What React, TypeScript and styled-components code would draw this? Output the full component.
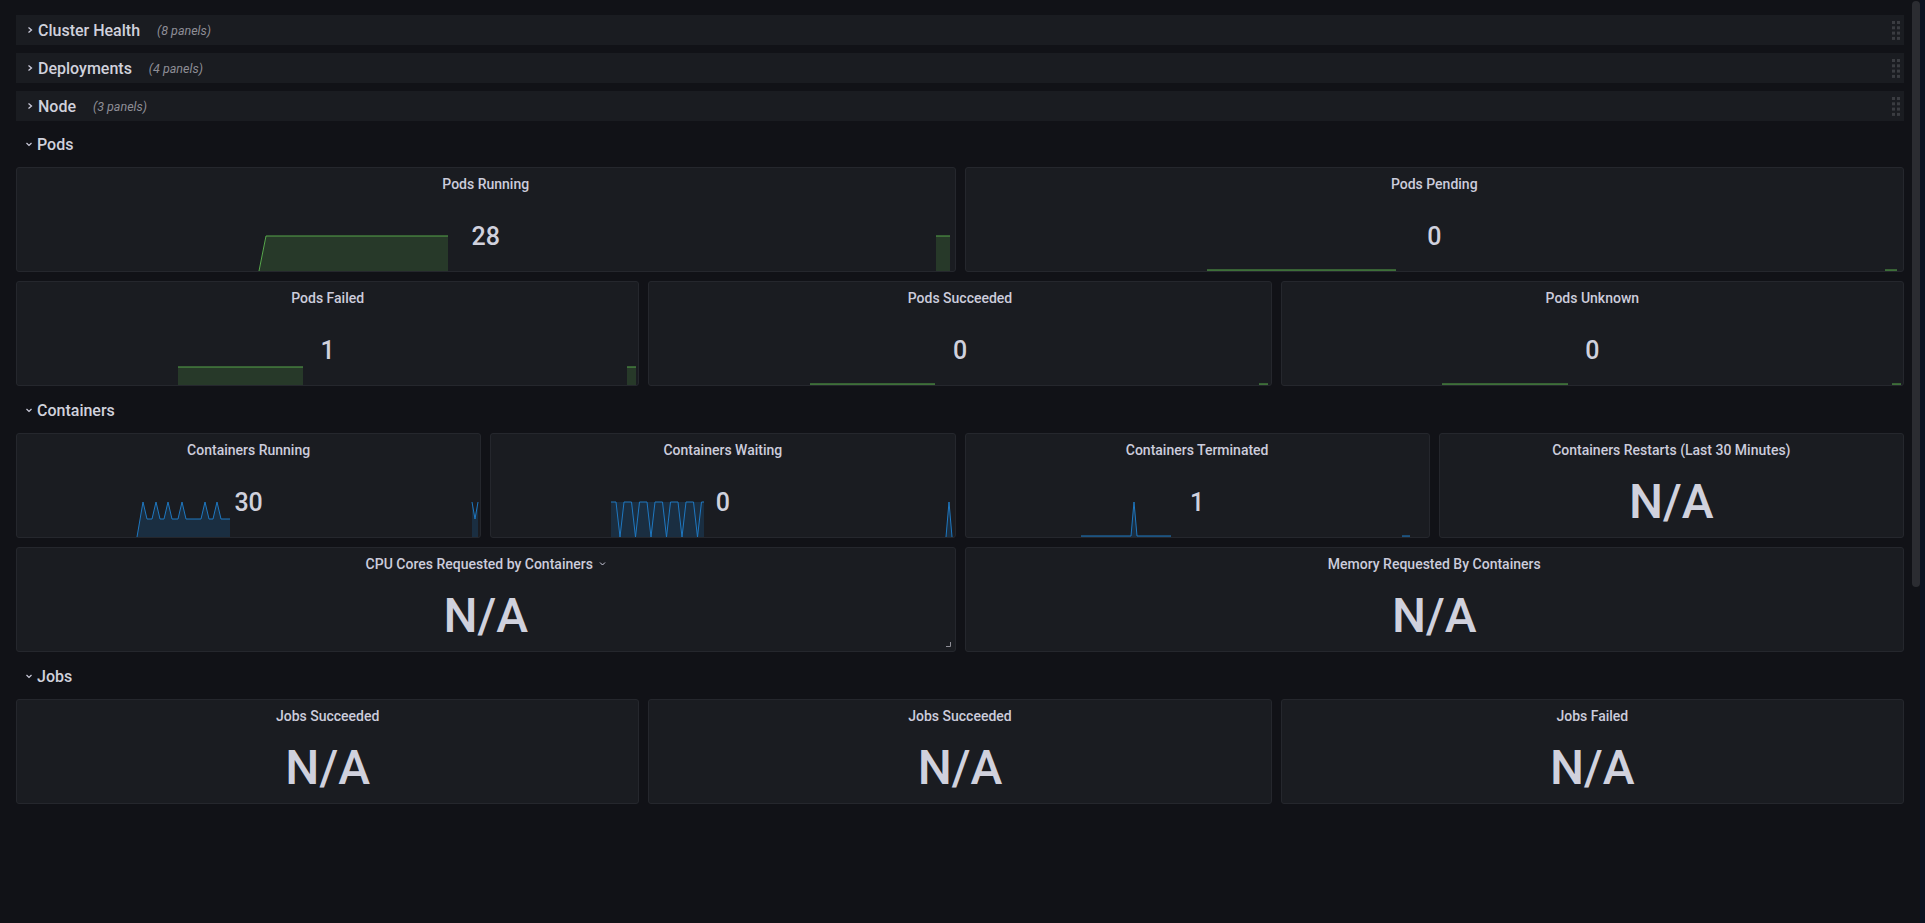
import React from 'react';
import styled, { createGlobalStyle } from 'styled-components';

type Pt = [number, number];
type Series = { line: Pt[]; fill?: Pt[] };
type Tone = 'green' | 'blue';

const TONES: Record<Tone, { line: string; fill: string }> = {
  green: { line: '#56a64b', fill: 'rgba(86, 166, 75, 0.22)' },
  blue: { line: '#1f78c1', fill: 'rgba(31, 120, 193, 0.2)' },
};

// chart area is the panel's padding box: 103px high
const BOTTOM = 103;

const GlobalStyle = createGlobalStyle`
  html, body {
    margin: 0;
    padding: 0;
    background: #111217;
  }
  body {
    font-family: Roboto, "Liberation Sans", sans-serif;
    color: #ccccdc;
    overflow: hidden;
  }
`;

const Page = styled.div`
  display: flex;
  height: 923px;
  background: #111217;
`;

const Main = styled.main`
  flex: 1;
  min-width: 0;
  padding: 15px 8px 0 16px;
  display: flex;
  flex-direction: column;
`;

const ScrollTrack = styled.div`
  width: 8px;
  padding-top: 1px;
`;

const ScrollThumb = styled.div`
  height: 586px;
  border-radius: 4px;
  background: #2b2c31;
`;

const EdgeStrip = styled.div`
  width: 5px;
  background: #0b1322;
`;

const RowBar = styled.div`
  height: 30px;
  margin-bottom: 8px;
  display: flex;
  align-items: center;
  padding: 0 4px 0 10px;
  background: #1a1c21;
`;

const RowHeader = styled.div`
  height: 30px;
  margin-bottom: 8px;
  display: flex;
  align-items: center;
  padding-left: 9px;
`;

const Chevron = styled.svg`
  width: 8px;
  height: 8px;
  margin-right: 4px;
  flex: none;
`;

const RowTitle = styled.span`
  font-size: 16px;
  font-weight: 500;
  color: #d0d1dc;
`;

const RowCount = styled.span`
  margin-left: 17px;
  font-size: 12.5px;
  font-style: italic;
  color: #8e8e96;
  flex: 1;
`;

const Grid = styled.div<{ $cols: number }>`
  display: grid;
  grid-template-columns: repeat(${(p) => p.$cols}, 1fr);
  gap: 9px;
  margin-bottom: 9px;
`;

const Panel = styled.div`
  position: relative;
  height: 105px;
  box-sizing: border-box;
  border: 1px solid #25272d;
  border-radius: 3px;
  background: #1a1c21;
  display: flex;
  flex-direction: column;
  overflow: hidden;
`;

const PanelTitle = styled.div`
  position: relative;
  z-index: 1;
  height: 31px;
  display: flex;
  align-items: center;
  justify-content: center;
  font-size: 14px;
  font-weight: 500;
  color: #ccccdc;
`;

const TitleMenu = styled.svg`
  width: 7px;
  height: 7px;
  margin-left: 6px;
`;

const ValueArea = styled.div`
  position: relative;
  z-index: 1;
  flex: 1;
  display: flex;
  align-items: center;
  justify-content: center;
  padding-top: 2px;
`;

const Value = styled.span<{ $big?: boolean }>`
  font-size: ${(p) => (p.$big ? '48px' : '25px')};
  font-weight: 500;
  color: #d0d1dd;
  line-height: 1;
`;

const Chart = styled.svg`
  position: absolute;
  left: 0;
  top: 0;
  width: 100%;
  height: 100%;
  z-index: 0;
`;

const ResizeMark = styled.svg`
  position: absolute;
  right: 4px;
  bottom: 4px;
  width: 5px;
  height: 5px;
  z-index: 1;
`;

const ChevronRight = () => (
  <Chevron viewBox="0 0 8 8">
    <path d="M2.5 1.5 L5.5 4 L2.5 6.5" fill="none" stroke="#ccccdc" strokeWidth="1.3" />
  </Chevron>
);

const ChevronDown = () => (
  <Chevron viewBox="0 0 8 8">
    <path d="M1.5 3 L4 5.5 L6.5 3" fill="none" stroke="#ccccdc" strokeWidth="1.2" />
  </Chevron>
);

const DragHandle = () => (
  <svg width="8" height="19" viewBox="0 0 8 19">
    {[0, 1, 2, 3].map((r) =>
      [0, 5].map((c) => (
        <rect key={`${r}-${c}`} x={c} y={r * 5.3} width="3" height="3" fill="#3a3c41" />
      )),
    )}
  </svg>
);

const CollapsedRow = ({ title, count }: { title: string; count: number }) => (
  <RowBar>
    <ChevronRight />
    <RowTitle>{title}</RowTitle>
    <RowCount>({count} panels)</RowCount>
    <DragHandle />
  </RowBar>
);

const SectionHeader = ({ title }: { title: string }) => (
  <RowHeader>
    <ChevronDown />
    <RowTitle>{title}</RowTitle>
  </RowHeader>
);

const toPoints = (pts: Pt[]) => pts.map((p) => p.join(',')).join(' ');

const Spark = ({ tone, series }: { tone: Tone; series: Series[] }) => {
  const c = TONES[tone];
  return (
    <Chart>
      {series.map((s, i) => {
        const first = s.line[0];
        const last = s.line[s.line.length - 1];
        const fill = s.fill ?? [...s.line, [last[0], BOTTOM] as Pt, [first[0], BOTTOM] as Pt];
        return (
          <g key={i}>
            <polygon points={toPoints(fill)} fill={c.fill} />
            <polyline points={toPoints(s.line)} fill="none" stroke={c.line} strokeWidth="1" />
          </g>
        );
      })}
    </Chart>
  );
};

type PanelProps = {
  title: string;
  value: string;
  big?: boolean;
  menu?: boolean;
  resize?: boolean;
  tone?: Tone;
  series?: Series[];
};

const StatPanel = ({ title, value, big, menu, resize, tone = 'green', series }: PanelProps) => (
  <Panel>
    {series && <Spark tone={tone} series={series} />}
    <PanelTitle>
      {title}
      {menu && (
        <TitleMenu viewBox="0 0 7 7">
          <path d="M1 2.5 L3.5 5 L6 2.5" fill="none" stroke="#ccccdc" strokeWidth="1" />
        </TitleMenu>
      )}
    </PanelTitle>
    <ValueArea>
      <Value $big={big}>{value}</Value>
    </ValueArea>
    {resize && (
      <ResizeMark viewBox="0 0 5 5">
        <path d="M4.5 0 V4.5 H0" fill="none" stroke="#8e8e96" strokeWidth="1" />
      </ResizeMark>
    )}
  </Panel>
);

// flat runs at the bottom of an empty stat
const flat = (a: number, b: number): Series => ({
  line: [
    [a, BOTTOM - 1],
    [b, BOTTOM - 1],
  ],
});

const zigzag = (start: number, count: number, step: number): Series => {
  const line: Pt[] = [[start, 68]];
  for (let i = 0; i < count; i++) {
    const x = start + i * step;
    line.push([x + 5, 68], [x + 9, BOTTOM], [x + 13, 68]);
  }
  const end = start + count * step;
  line.push([end, 68]);
  return {
    line,
    fill: [
      [start, 68],
      [end, 68],
      [end, BOTTOM],
      [start, BOTTOM],
    ],
  };
};

const podsRunning: Series[] = [
  { line: [[242, BOTTOM], [249, 68], [431, 68]] },
  { line: [[919, 68], [933, 68]] },
];
const podsFailed: Series[] = [
  { line: [[161, 85], [286, 85]] },
  { line: [[610, 85], [619, 85]] },
];
const containersRunning: Series[] = [
  {
    line: [
      [120, BOTTOM], [126, 68], [130, 85], [135, 85], [139, 68], [143, 85], [147, 85],
      [151, 68], [155, 85], [161, 85], [165, 68], [169, 85], [184, 85], [188, 68],
      [192, 85], [196, 85], [200, 68], [204, 85], [213, 85],
    ],
  },
  { line: [[455, 68], [458, 85], [461, 68]] },
];
const containersWaiting: Series[] = [
  zigzag(120, 6, 15.5),
  { line: [[455, BOTTOM], [458, 68], [461, BOTTOM]] },
];
const containersTerminated: Series[] = [
  { line: [[115, BOTTOM - 1], [165, BOTTOM - 1], [168, 68], [171, BOTTOM - 1], [205, BOTTOM - 1]] },
  flat(436, 444),
];

export default function App() {
  return (
    <>
      <GlobalStyle />
      <Page>
        <Main>
          <CollapsedRow title="Cluster Health" count={8} />
          <CollapsedRow title="Deployments" count={4} />
          <CollapsedRow title="Node" count={3} />

          <SectionHeader title="Pods" />
          <Grid $cols={2}>
            <StatPanel title="Pods Running" value="28" series={podsRunning} />
            <StatPanel title="Pods Pending" value="0" series={[flat(241, 430), flat(919, 931)]} />
          </Grid>
          <Grid $cols={3}>
            <StatPanel title="Pods Failed" value="1" series={podsFailed} />
            <StatPanel title="Pods Succeeded" value="0" series={[flat(161, 286), flat(610, 619)]} />
            <StatPanel title="Pods Unknown" value="0" series={[flat(160, 286), flat(610, 619)]} />
          </Grid>

          <SectionHeader title="Containers" />
          <Grid $cols={4}>
            <StatPanel title="Containers Running" value="30" tone="blue" series={containersRunning} />
            <StatPanel title="Containers Waiting" value="0" tone="blue" series={containersWaiting} />
            <StatPanel title="Containers Terminated" value="1" tone="blue" series={containersTerminated} />
            <StatPanel title="Containers Restarts (Last 30 Minutes)" value="N/A" big />
          </Grid>
          <Grid $cols={2}>
            <StatPanel title="CPU Cores Requested by Containers" value="N/A" big menu resize />
            <StatPanel title="Memory Requested By Containers" value="N/A" big />
          </Grid>

          <SectionHeader title="Jobs" />
          <Grid $cols={3}>
            <StatPanel title="Jobs Succeeded" value="N/A" big />
            <StatPanel title="Jobs Succeeded" value="N/A" big />
            <StatPanel title="Jobs Failed" value="N/A" big />
          </Grid>
        </Main>
        <ScrollTrack>
          <ScrollThumb />
        </ScrollTrack>
        <EdgeStrip />
      </Page>
    </>
  );
}
